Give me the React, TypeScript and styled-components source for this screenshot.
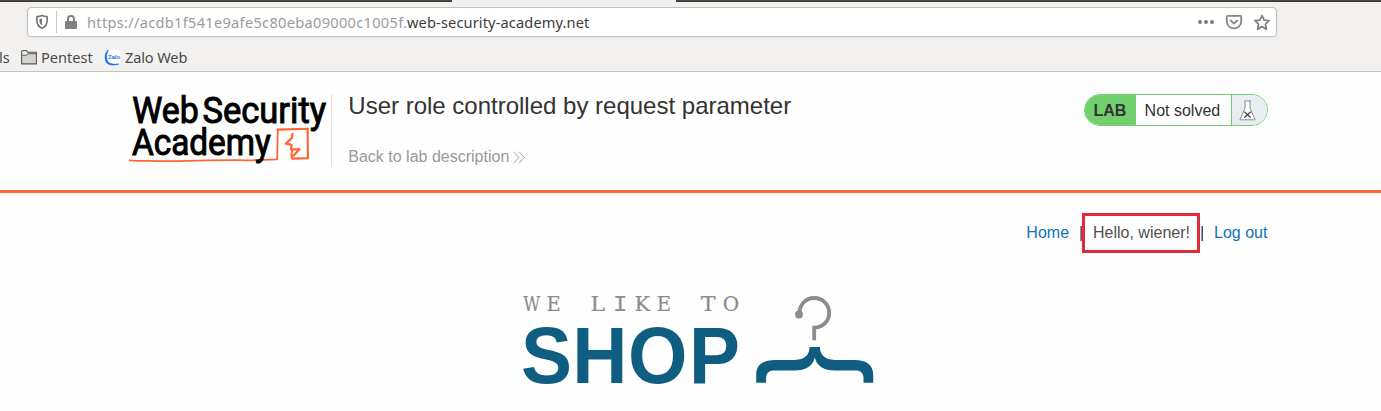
import React from "react";
import styled, { createGlobalStyle } from "styled-components";

const GlobalStyle = createGlobalStyle`
  * { box-sizing: border-box; }
  body { margin: 0; background: #fefefe; font-family: "Liberation Sans", Arial, sans-serif; overflow: hidden; }
  svg { display: block; flex: none; overflow: visible; }
`;

const Window = styled.div`
  width: 1381px;
  height: 411px;
  overflow: hidden;
`;

const Chrome = styled.header`
  height: 72px;
  background: #f2f1f0;
  border-bottom: 1px solid #c4c2be;
`;

const TabStrip = styled.div`
  display: flex;
  justify-content: space-between;
  height: 7px;
`;

const StripEdge = styled.div<{ $width: number }>`
  width: ${(p) => p.$width}px;
  height: 2px;
  background: linear-gradient(#4c4942 50%, #37352f 50%);
`;

const AddressBar = styled.div`
  display: flex;
  align-items: center;
  width: 1250px;
  height: 30px;
  margin-left: 27px;
  padding: 0 6px 0 7px;
  background: #fff;
  border: 1px solid #c3c0bb;
  border-radius: 4px;
  box-shadow: 0 1px 3px rgba(0, 0, 0, 0.06);
`;

const BarDivider = styled.div`
  width: 1px;
  height: 22px;
  margin: 0 8px 0 7px;
  background: #c8c8c8;
`;

const Address = styled.div`
  margin-left: 10px;
  flex: 1;
  display: flex;
  font: 14.6px/20px "Noto Sans", sans-serif;
  white-space: pre;
`;

const Subdomain = styled.span`
  width: 320px;
  color: #9b9b9b;
  letter-spacing: 0.3px;
`;

const Domain = styled.span`
  color: #3c3c3c;
  letter-spacing: 0.13px;
`;

const BarActions = styled.div`
  display: flex;
  align-items: center;
  gap: 11px;
`;

const Bookmarks = styled.nav`
  display: flex;
  align-items: center;
  height: 34px;
  padding-top: 5px;
  margin-left: -1px;
  font: 14.6px/20px "Noto Sans", sans-serif;
  color: #4a4a4a;
  white-space: nowrap;
`;

const Bookmark = styled.span<{ $width: number; $spacing?: number }>`
  display: flex;
  align-items: center;
  gap: 4px;
  width: ${(p) => p.$width}px;
  letter-spacing: ${(p) => p.$spacing ?? 0}px;

  svg {
    margin-top: 1px;
  }
`;

const LabHeader = styled.section`
  display: flex;
  height: 121px;
  padding: 22px 113px 0 128px;
  border-bottom: 3px solid #ff6633;
`;

const LogoCell = styled.div`
  width: 204px;
  height: 73px;
  border-right: 1px solid #e1e1e4;
`;

const LabText = styled.div`
  flex: 1;
  padding-left: 16.3px;
`;

const Title = styled.h2`
  margin: 0;
  font-size: 24px;
  line-height: 24px;
  font-weight: 400;
  color: #333332;
  white-space: nowrap;
`;

const BackLink = styled.a`
  display: flex;
  align-items: center;
  gap: 4px;
  margin-top: 29px;
  font-size: 16px;
  line-height: 20px;
  color: #999;
`;

const Status = styled.div`
  display: flex;
  width: 184px;
  height: 32px;
  border: 1px solid #71cf6d;
  border-radius: 16px;
  overflow: hidden;
  font-size: 16px;
  line-height: 32px;
  color: #333332;
`;

const StatusTag = styled.div`
  width: 51px;
  padding-left: 8.4px;
  background: #71cf6d;
  font-weight: 700;
`;

const StatusText = styled.div`
  width: 96px;
  padding-left: 8.6px;
  background: #fff;
  border-right: 1px solid #71cf6d;
  white-space: nowrap;
`;

const StatusIcon = styled.div`
  flex: 1;
  display: flex;
  align-items: center;
  padding-left: 6.5px;
  background: #e8edf0;
`;

const AccountNav = styled.nav`
  display: flex;
  align-items: center;
  justify-content: flex-end;
  height: 40px;
  margin-top: 20px;
  padding-right: 113.6px;
  font-size: 16px;
  line-height: 20px;
  white-space: nowrap;
  color: #0f73b6;
`;

const Separator = styled.span<{ $left: number; $right: number }>`
  margin: 0 ${(p) => p.$right}px 0 ${(p) => p.$left}px;
  width: 2px;
  height: 15px;
  background: linear-gradient(90deg, #c38462 50%, #68548b 50%);
`;

const Divider = styled(Separator)`
  background: linear-gradient(90deg, #ad8d90 30%, #28589a 30%);
`;

const Greeting = styled.span`
  display: flex;
  align-items: center;
  height: 40px;
  width: 118px;
  padding-left: 8px;
  border: 3px solid #df2b3a;
  color: #54504f;
`;

const ShopBanner = styled.section`
  display: flex;
  justify-content: center;
  padding-top: 37px;
  padding-left: 15px;
`;

const ShieldIcon = () => (
  <svg width="14" height="16" viewBox="0 0 14 16" fill="none">
    <path d="M7 1.5c1.8.9 3.6 1.1 5.1 1.2v3.8c0 3.6-1.6 6.4-5.1 7.7-3.5-1.3-5.1-4.1-5.1-7.7V2.7C3.4 2.6 5.2 2.4 7 1.5z" stroke="#777" strokeWidth="1.7" strokeLinejoin="round" />
    <path d="M7 4.3c-.9.4-1.8.6-2.6.7v1.7c0 2 .8 3.6 2.6 4.8z" fill="#777" />
  </svg>
);

const LockIcon = () => (
  <svg width="12" height="16" viewBox="0 0 12 16">
    <path d="M3 8V5a3 3 0 0 1 6 0v3" fill="none" stroke="#818181" strokeWidth="2" />
    <rect y="7" width="12" height="8" rx="1" fill="#818181" />
  </svg>
);

const DotsIcon = () => (
  <svg width="16" height="16" viewBox="0 0 16 16" fill="#7b7b7b">
    <circle cx="2" cy="8" r="2" />
    <circle cx="8" cy="8" r="2" />
    <circle cx="14" cy="8" r="2" />
  </svg>
);

const PocketIcon = () => (
  <svg width="18" height="16" viewBox="0 0 18 16" fill="none" stroke="#858585" strokeLinecap="round" strokeLinejoin="round">
    <path d="M2.6 1.9h12.8c.5 0 .8.3.8.8v4.5a7.2 7.2 0 0 1-14.4 0V2.7c0-.5.3-.8.8-.8z" strokeWidth="1.8" />
    <path d="m5.6 6.4 3.4 3.2 3.4-3.2" strokeWidth="1.9" />
  </svg>
);

const StarIcon = () => (
  <svg width="16" height="17" viewBox="0 0 16 17" fill="none">
    <path d="m8 1.5 2.1 4.6 5 .6-3.7 3.4 1 5.1L8 12.6l-4.4 2.6 1-5.1L.9 6.7l5-.6z" stroke="#808080" strokeWidth="1.8" strokeLinejoin="round" />
  </svg>
);

const FolderIcon = () => (
  <svg width="16" height="15" viewBox="0 0 16 15">
    <path d="M.6 13.9V1.5L1.4.6h4.2l1.2 1.7h8.6v11.6z" fill="#d3d2d0" stroke="#5c5c5b" strokeWidth="1.1" />
    <path d="M.8 5.2h4.9l1.4-1.5h8.1" fill="none" stroke="#5c5c5b" />
    <path d="M1.3 4.5h4l1.3-1.3H6L5.2 1.3H1.7z" fill="#eee" />
  </svg>
);

const ZaloIcon = () => (
  <svg width="16" height="17" viewBox="0 0 16 17">
    <rect y=".5" width="15.5" height="15.5" rx="5" fill="#fff" />
    <path d="M3.3 1.2C-.6 3.4-.6 11.2 2 14c1.8 2.1 7 2.5 11.8 1-4.8.6-8.4.2-10.2-1.4C1 11.3.9 5 3.3 1.2z" fill="#0b63f2" stroke="#0b63f2" strokeWidth=".7" />
    <text x="3" y="9.8" fontSize="5.5" fontWeight="700" fontFamily="Liberation Sans, sans-serif" fill="#2476f5" textLength="12" lengthAdjust="spacingAndGlyphs">Zalo</text>
  </svg>
);

const AcademyLogo = () => (
  <svg width="203" height="73" viewBox="128 94 203 73" fill="none">
    <g stroke="#ff6633" strokeLinejoin="round" strokeLinecap="round">
      <path d="M129.5 160.3c10 1.1 19 .4 30 .8 28 .2 58-1.6 81-.9 13 .5 24-.8 36.7-.9l.6-29.8" strokeWidth="1.8" />
      <path d="m277.6 129.6 30.4-.8M307.6 129.5l.4 28.6-15.8.5c-1.2-3-.5-6.8.2-9.2" strokeWidth="2.1" />
      <path d="m292.6 133.8-.9 4.3-6 5.6 6 1.1-.8 4.7 8.5-.3-6.4 7" strokeWidth="2.2" />
    </g>
    <g fill="#000" stroke="#000" strokeWidth="1" fontFamily="Roboto, sans-serif" fontWeight="400" fontSize="36.8">
      <text x="132.2" y="122.6" textLength="66.6" lengthAdjust="spacingAndGlyphs">Web</text>
      <text x="202.5" y="122.6" textLength="123.5" lengthAdjust="spacingAndGlyphs">Security</text>
      <text x="131.9" y="154.6" textLength="139" lengthAdjust="spacingAndGlyphs">Academy</text>
    </g>
  </svg>
);

const ChevronsIcon = () => (
  <svg width="12" height="13" viewBox="0 0 12 13" fill="none" stroke="#999" strokeWidth=".9">
    <path d="m.6.8 5.3 5.7L.6 12.2M6 .8l5.3 5.7L6 12.2" />
  </svg>
);

const FlaskIcon = () => (
  <svg width="17" height="21" viewBox="0 0 17 21" fill="none">
    <path d="M6 1.1v7L.9 19.8h15.2L11 8.1v-7" fill="#fff" stroke="#8d9091" strokeWidth="1" />
    <path d="M5 1h7" stroke="#8d9091" />
    <path d="m5.3 11.7 6.4 5.8m0-5.8-6.4 5.8" stroke="#444" strokeWidth="1.3" />
  </svg>
);

const taglineLetters: [string, number, number][] = [
  ["W", 523.3, 17],
  ["E", 546.4, 14.3],
  ["L", 590.6, 14.6],
  ["K", 634.5, 15.6],
  ["E", 656.8, 14.3],
  ["T", 700.8, 14.8],
  ["O", 722.7, 16.4],
];

const ShopLogo = () => (
  <svg width="354" height="96" viewBox="521 290 354 96">
    <g fill="#8b8c8c" stroke="#8b8c8c" strokeWidth=".2" fontFamily="DejaVu Serif, serif" fontSize="20">
      {taglineLetters.map(([letter, x, width]) => (
        <text key={x} x={x} y="311.4" textLength={width} lengthAdjust="spacingAndGlyphs">{letter}</text>
      ))}
      <text x="612.7" y="311.4" strokeWidth="0" fontFamily="Liberation Mono, monospace" fontSize="22" textLength="15" lengthAdjust="spacingAndGlyphs">I</text>
    </g>
    <text x="548.4 602.4 661 725.3" y="382.6" transform="scale(.95 1)" fill="#105d82" fontFamily="Liberation Sans, sans-serif" fontWeight="700" fontSize="80.5">SHOP</text>
    <circle cx="799" cy="314.5" r="3.9" fill="#8b8c8c" />
    <path d="M799.6 314.5C798.8 305 805.5 298 814.2 298c8.5 0 15 6.6 15 14.8 0 8.7-6.5 14.8-15 14.8v12.6" fill="none" stroke="#8b8c8c" strokeWidth="3.8" />
    <path d="M809.6 347.1h10.3c.1 7.8 4.8 12.7 15 12.9h19.5c12.1 0 18.8 5 18.8 14.5v8.2h-9.7v-4.3c0-5.3-2.7-7.9-8.2-7.9h-20.2c-11.3-.4-18.1-4-20.3-13.1-2.2 9.1-9 12.7-20.3 13.1h-20.2c-5.5 0-8.2 2.6-8.2 7.9v4.3h-9.9v-8.2c0-9.5 6.9-14.5 19-14.5h19.5c10.2-.2 14.8-5.1 14.9-12.9z" fill="#105d82" />
  </svg>
);

export default function App() {
  return (
    <Window>
      <GlobalStyle />
      <Chrome>
        <TabStrip>
          <StripEdge $width={452} />
          <StripEdge $width={705} />
        </TabStrip>
        <AddressBar>
          <ShieldIcon />
          <BarDivider />
          <LockIcon />
          <Address>
            <Subdomain>https://acdb1f541e9afe5c80eba09000c1005f.</Subdomain>
            <Domain>web-security-academy.net</Domain>
          </Address>
          <BarActions>
            <DotsIcon />
            <PocketIcon />
            <StarIcon />
          </BarActions>
        </AddressBar>
        <Bookmarks>
          <Bookmark $width={22}>ls</Bookmark>
          <Bookmark $width={84}><FolderIcon />Pentest</Bookmark>
          <Bookmark $width={90} $spacing={-0.15}><ZaloIcon />Zalo Web</Bookmark>
        </Bookmarks>
      </Chrome>
      <LabHeader>
        <LogoCell><AcademyLogo /></LogoCell>
        <LabText>
          <Title>User role controlled by request parameter</Title>
          <BackLink>Back to lab description<ChevronsIcon /></BackLink>
        </LabText>
        <Status>
          <StatusTag>LAB</StatusTag>
          <StatusText>Not solved</StatusText>
          <StatusIcon><FlaskIcon /></StatusIcon>
        </Status>
      </LabHeader>
      <AccountNav>
        <span>Home</span>
        <Separator $left={10.6} $right={0.4} />
        <Greeting>Hello, wiener!</Greeting>
        <Divider $left={1} $right={11} />
        <span>Log out</span>
      </AccountNav>
      <ShopBanner><ShopLogo /></ShopBanner>
    </Window>
  );
}
